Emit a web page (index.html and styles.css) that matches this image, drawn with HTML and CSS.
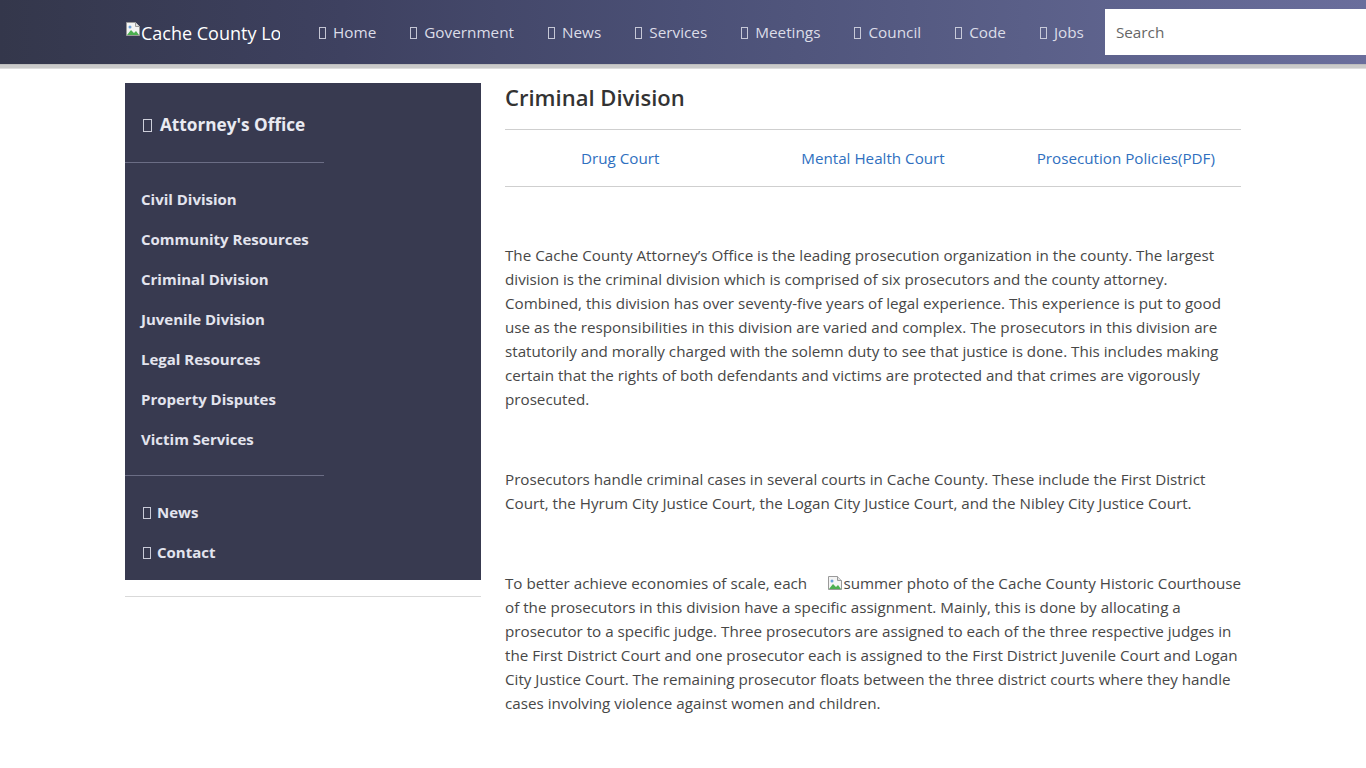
FILE: index.html
```html
<!DOCTYPE html>
<html lang="en">
<head>
<meta charset="utf-8">
<title>Criminal Division | Cache County</title>
<link rel="stylesheet" href="styles.css">
</head>
<body>
<header class="topbar">
  <div class="topbar-inner">
    <a class="logo" href="#">
      <svg class="broken" width="16" height="16" viewBox="0 0 16 16"><path d="M1.5 1.5h9l4 4v9h-13z" fill="#f4f4f4" stroke="#9a9a9a"/><path d="M10.5 1.5v4h4" fill="#e0e0e0" stroke="#9a9a9a"/><path d="M2 14l4-5 3 3 2-2 3 4z" fill="#4caf50"/><circle cx="5" cy="6" r="1.5" fill="#6aa0d8"/></svg><span>Cache County Logo</span>
    </a>
    <ul class="nav">
      <li><a href="#"><span class="tofu"></span>Home</a></li>
      <li><a href="#"><span class="tofu"></span>Government</a></li>
      <li><a href="#"><span class="tofu"></span>News</a></li>
      <li><a href="#"><span class="tofu"></span>Services</a></li>
      <li><a href="#"><span class="tofu"></span>Meetings</a></li>
      <li><a href="#"><span class="tofu"></span>Council</a></li>
      <li><a href="#"><span class="tofu"></span>Code</a></li>
      <li><a href="#"><span class="tofu"></span>Jobs</a></li>
    </ul>
    <input class="search" type="text" placeholder="Search">
  </div>
</header>
<div class="band"></div>

<div class="page">
  <aside class="side-col">
    <nav class="sidebar">
      <div class="side-head"><span class="tofu"></span>Attorney's Office</div>
      <hr class="side-rule">
      <ul class="side-links">
        <li><a href="#">Civil Division</a></li>
        <li><a href="#">Community Resources</a></li>
        <li><a href="#">Criminal Division</a></li>
        <li><a href="#">Juvenile Division</a></li>
        <li><a href="#">Legal Resources</a></li>
        <li><a href="#">Property Disputes</a></li>
        <li><a href="#">Victim Services</a></li>
      </ul>
      <hr class="side-rule">
      <ul class="side-links extra">
        <li><a href="#"><span class="tofu"></span>News</a></li>
        <li><a href="#"><span class="tofu"></span>Contact</a></li>
      </ul>
    </nav>
    <hr class="side-bottom">
  </aside>

  <main class="content">
    <h1 class="title">Criminal Division</h1>
    <div class="sublinks">
      <a href="#">Drug Court</a>
      <a href="#">Mental Health Court</a>
      <a href="#">Prosecution Policies(PDF)</a>
    </div>
    <p class="para">The Cache County Attorney’s Office is the leading prosecution organization in the county. The largest division is the criminal division which is comprised of six prosecutors and the county attorney. Combined, this division has over seventy-five years of legal experience. This experience is put to good use as the responsibilities in this division are varied and complex. The prosecutors in this division are statutorily and morally charged with the solemn duty to see that justice is done. This includes making certain that the rights of both defendants and victims are protected and that crimes are vigorously prosecuted.</p>
    <p class="para">Prosecutors handle criminal cases in several courts in Cache County. These include the First District Court, the Hyrum City Justice Court, the Logan City Justice Court, and the Nibley City Justice Court.</p>
    <p class="para"><span class="photo"><svg class="broken" width="16" height="16" viewBox="0 0 16 16"><path d="M1.5 1.5h9l4 4v9h-13z" fill="#f4f4f4" stroke="#9a9a9a"/><path d="M10.5 1.5v4h4" fill="#e0e0e0" stroke="#9a9a9a"/><path d="M2 14l4-5 3 3 2-2 3 4z" fill="#4caf50"/><circle cx="5" cy="6" r="1.5" fill="#6aa0d8"/></svg>summer photo of the Cache County Historic Courthouse</span>To better achieve economies of scale, each of the prosecutors in this division have a specific assignment. Mainly, this is done by allocating a prosecutor to a specific judge. Three prosecutors are assigned to each of the three respective judges in the First District Court and one prosecutor each is assigned to the First District Juvenile Court and Logan City Justice Court. The remaining prosecutor floats between the three district courts where they handle cases involving violence against women and children.</p>
  </main>
</div>
</body>
</html>
```

FILE: styles.css
```css
* { box-sizing: border-box; }
html, body { margin: 0; padding: 0; }
body {
  font-family: "Open Sans", "Noto Sans", sans-serif;
  color: #444;
  background: #fff;
  overflow-x: hidden;
}
a { text-decoration: none; color: inherit; }
ul { list-style: none; margin: 0; padding: 0; }

.tofu {
  display: inline-block;
  width: 8px;
  height: 12px;
  border: 1px solid currentColor;
  margin-right: 6px;
  vertical-align: -1px;
  opacity: 0.85;
}

/* header */
.topbar {
  height: 64px;
  background: linear-gradient(90deg, #34374b 0%, #3e4160 25%, #4b5076 50%, #5a5f88 75%, #6a6e9c 100%);
}
.topbar-inner {
  width: 1116px;
  margin: 0 auto;
  height: 64px;
  display: flex;
  align-items: center;
  white-space: nowrap;
}
.logo {
  flex: none;
  width: 155px;
  overflow: hidden;
  white-space: nowrap;
  display: flex;
  align-items: center;
  color: #fff;
  font-size: 18px;
  margin-top: 2px;
}
.logo .broken { flex: none; margin-top: -8px; }
.nav {
  flex: none;
  display: flex;
  margin-left: 22px;
}
.nav a {
  display: block;
  padding: 0 17px;
  color: #dcdde8;
  font-size: 15.3px;
  line-height: 64px;
  white-space: nowrap;
}
.nav li:last-child a { padding-right: 21px; }
.nav .tofu { width: 7px; margin-right: 7px; }
.search {
  flex: none;
  width: 280px;
  height: 46px;
  border: 0;
  padding: 0 11px;
  font-family: inherit;
  font-size: 15.3px;
  color: #555;
  background: #fff;
  outline: none;
}
.search::placeholder { color: #666; }

.band {
  height: 5px;
  background: #cacaca;
  border-top: 1px solid #bdbdbd;
  border-bottom: 1px solid #dedede;
}

/* page */
.page {
  width: 1116px;
  margin: 14px auto 0;
  display: flex;
  gap: 24px;
  align-items: flex-start;
}
.side-col { width: 356px; flex: none; }
.sidebar {
  background: #383a50;
  padding-bottom: 8px;
}
.side-head {
  padding: 29px 18px 24px;
  line-height: 26px;
  font-size: 17.2px;
  font-weight: 700;
  color: #e9eaf2;
}
.side-head .tofu { width: 9px; height: 13px; margin-right: 8px; }
.side-rule {
  width: 199px;
  margin: 0;
  border: 0;
  border-top: 1px solid #6b6d85;
}
.side-links { padding: 16px 16px; }
.side-links a {
  display: block;
  line-height: 40px;
  font-size: 15px;
  font-weight: 700;
  color: #e3e4ee;
}
.side-links.extra { padding-bottom: 0; }
.side-links.extra .tofu { width: 8px; height: 12px; margin: 0 6px 0 2px; }
.side-bottom {
  margin: 16px 0 0;
  border: 0;
  border-top: 1px solid #d9d9d9;
}

.content { flex: 1; min-width: 0; }
.title {
  margin: 0;
  font-size: 22px;
  line-height: 28px;
  font-weight: 600;
  color: #333;
  padding-bottom: 18px;
  border-bottom: 1px solid #cfcfcf;
}
.sublinks {
  display: grid;
  grid-template-columns: repeat(3, 1fr);
  border-bottom: 1px solid #cfcfcf;
}
.sublinks a {
  text-align: center;
  line-height: 24px;
  padding: 16px 0;
  font-size: 15.2px;
  color: #2f70c0;
}
.sublinks a:first-child { margin-left: -15px; }
.sublinks a:last-child { margin-right: -15px; }

.para {
  margin: 56px 0 0;
  font-size: 15.2px;
  line-height: 24px;
  color: #474747;
}
.photo {
  float: right;
  margin-left: 10px;
  color: #474747;
}
.photo .broken { vertical-align: -2px; }
```
